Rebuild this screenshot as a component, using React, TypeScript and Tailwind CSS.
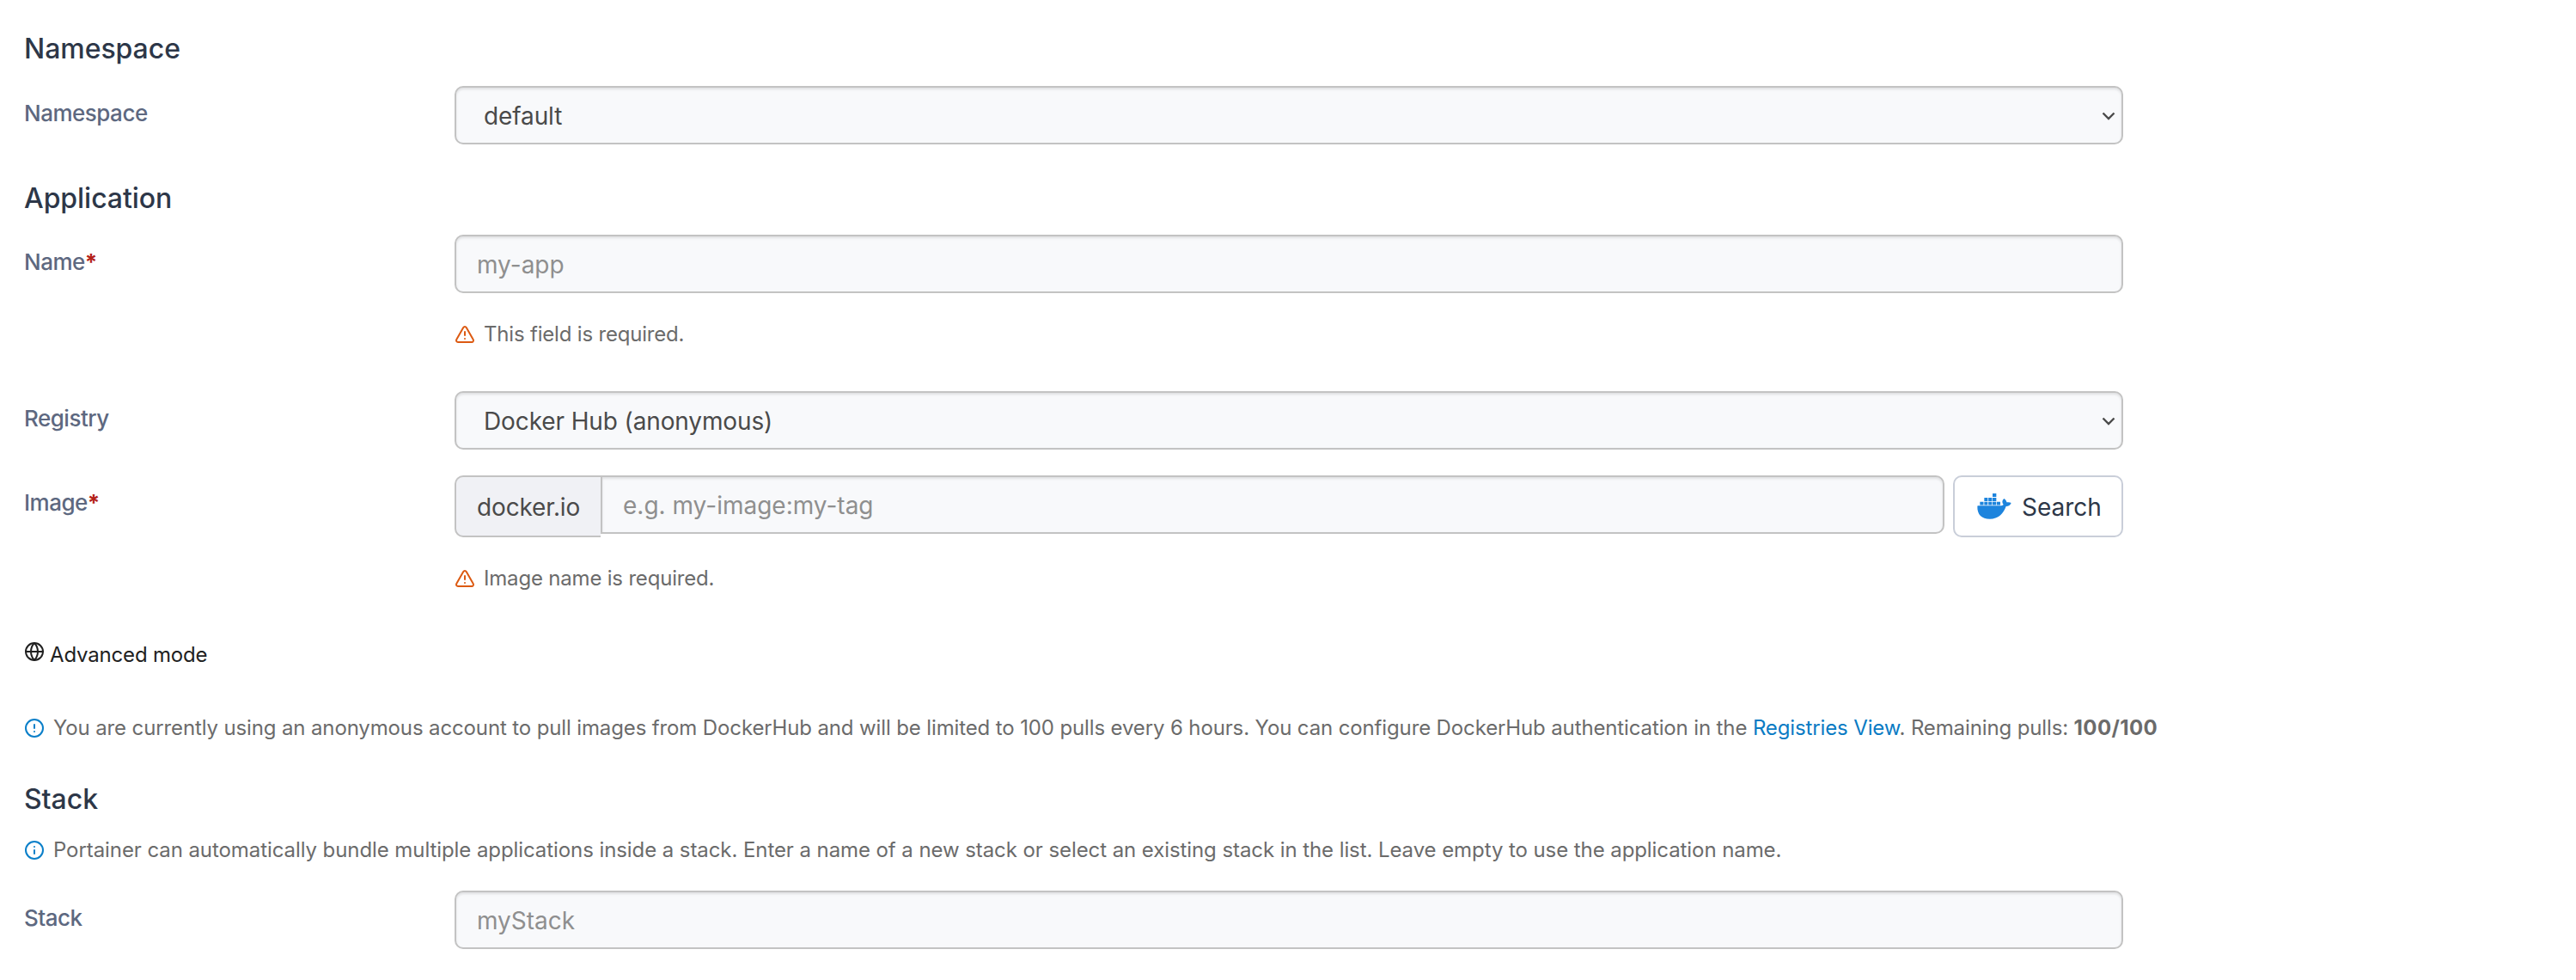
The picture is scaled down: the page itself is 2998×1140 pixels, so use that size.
import { AlertTriangle, AlertCircle, Globe, Info } from 'lucide-react';
import type { ReactNode } from 'react';

const field =
  'h-[68px] rounded-[10px] border-2 border-[#c3c3c3] bg-[#f8f9fb] pt-0.5 text-[28px] text-[#4a4a4a] shadow-[inset_0_2px_3px_rgba(0,0,0,0.1)] placeholder:text-[#8f8f8f] outline-none';

function Heading({ children }: { children: ReactNode }) {
  return (
    <h2 className="text-[32px] leading-[36px] font-medium tracking-[-0.05px] text-[#2d3748]">{children}</h2>
  );
}

function Row({ label, required, children }: { label: string; required?: boolean; children: ReactNode }) {
  return (
    <div className="flex items-start">
      <label className="w-[501px] shrink-0 pt-4 text-[26px] leading-[32px] font-medium tracking-[-0.5px] text-[#5d6880]">
        {label}
        {required && <span className="font-bold text-[#b42318]">*</span>}
      </label>
      <div className="w-[1942px]">{children}</div>
    </div>
  );
}

function Select({ value }: { value: string }) {
  return (
    <div className={`${field} flex items-center justify-between pr-[7px] pl-8`}>
      <span className="tracking-[-0.12px]">{value}</span>
      <svg className="h-4 w-4" viewBox="0 0 16 16" fill="none" stroke="currentColor" strokeWidth="2.4">
        <path d="M1.500 4.500 8 11l6.500-6.500" />
      </svg>
    </div>
  );
}

function DockerWhale() {
  return (
    <svg className="h-[30px] w-10" viewBox="0 0 120 90" fill="#1d84dd">
      <path d="M54 0h13v12h-13z" />
      <path d="M25 15h12v12h-12zM39.500 15h12.500v12h-12.500zM54 15h13v12h-13z" />
      <path d="M10 29.500h12.500v11h-12.500zM25 29.500h12v11h-12zM39.500 29.500h12.500v11h-12.500zM54 29.500h13v11h-13zM69 29.500h12v11h-12z" />
      <path d="M3 43H80C86 43 90 41 92 39 86 32 87 24 94 18 100 22 103 27 103 31 109 30 115 30 119 33 116 41 110 45 101 45 92 70 75 89 44 89 16 89 0 74 1 45Q1 43 3 43Z" />
    </svg>
  );
}

function Warning({ children }: { children: ReactNode }) {
  return (
    <div className="flex items-center gap-2.5 text-[24px] leading-[34px] tracking-[-0.19px] text-[#6b6b6b]">
      <AlertTriangle className="size-6 text-[#dc5a12]" />
      <span>{children}</span>
    </div>
  );
}

export default function App() {
  return (
    <main className="h-[1140px] w-[2998px] bg-white pt-[39px] pl-7 font-['Inter',sans-serif]">
      <Heading>Namespace</Heading>
      <div className="mt-[25px]">
        <Row label="Namespace">
          <Select value="default" />
        </Row>
      </div>

      <div className="mt-[45px]">
        <Heading>Application</Heading>
      </div>
      <div className="mt-6">
        <Row label="Name" required>
          <input className={`${field} block w-full px-6`} placeholder="my-app" />
          <div className="mt-[31px]">
            <Warning>This field is required.</Warning>
          </div>
        </Row>
      </div>
      <div className="mt-[49px]">
        <Row label="Registry">
          <Select value="Docker Hub (anonymous)" />
        </Row>
      </div>
      <div className="mt-[30px]">
        <Row label="Image" required>
          <div className="flex items-start">
            <span className="flex h-[72px] w-[170px] items-center rounded-l-[10px] border-2 border-r-0 border-[#c3c3c3] bg-[#f0f1f5] pt-0.5 pl-6 text-[28px] tracking-[-0.15px] text-[#4a4a4a]">
              docker.io
            </span>
            <input className={`${field} block w-[1564px] rounded-l-none px-6`} placeholder="e.g. my-image:my-tag" />
            <button className="ml-2.5 flex h-[72px] w-[198px] items-center gap-3 rounded-[10px] border-2 border-[#c9ced9] bg-white pl-[26px] text-[28px] text-[#2d3748]">
              <DockerWhale />
              <span className="pt-0.5">Search</span>
            </button>
          </div>
          <div className="mt-[31px]">
            <Warning>Image name is required.</Warning>
          </div>
        </Row>
      </div>

      <div className="mt-[55px] flex items-start gap-1.5 text-[24px] leading-[34px] tracking-[-0.17px] text-[#212121]">
        <Globe className="mt-px size-6" />
        <span>Advanced mode</span>
      </div>

      <div className="mt-[51px] flex items-center gap-2.5 text-[24px] leading-[34px] tracking-[-0.13px] text-[#6b6b6b]">
        <AlertCircle className="size-6 text-[#0a7fc9]" />
        <span>
          You are currently using an anonymous account to pull images from DockerHub and will be limited to 100 pulls
          every 6 hours. You can configure DockerHub authentication in the{' '}
          <a className="text-[#0a7bc4]">Registries View</a>. Remaining pulls:{' '}
          <b className="font-bold tracking-[0.4px]">100/100</b>
        </span>
      </div>

      <div className="mt-[48px]">
        <Heading>Stack</Heading>
      </div>
      <div className="mt-6 flex items-center gap-2.5 text-[24px] leading-[34px] tracking-[-0.08px] text-[#6b6b6b]">
        <Info className="size-6 text-[#0a7fc9]" />
        <span>
          Portainer can automatically bundle multiple applications inside a stack. Enter a name of a new stack or select
          an existing stack in the list. Leave empty to use the application name.
        </span>
      </div>
      <div className="mt-[30px]">
        <Row label="Stack">
          <input className={`${field} block w-full px-6`} placeholder="myStack" />
        </Row>
      </div>
    </main>
  );
}
